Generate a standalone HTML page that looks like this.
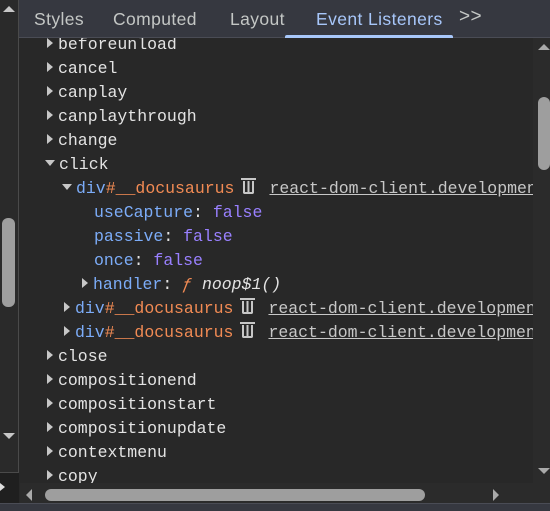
<!DOCTYPE html>
<html><head><style>
*{margin:0;padding:0;box-sizing:border-box}
body{width:550px;height:511px;background:#282828;overflow:hidden;position:relative;font-family:"Liberation Sans",sans-serif}
#left{position:absolute;left:0;top:0;width:19px;height:511px;background:#2a2a2a;border-right:1px solid #4a4a4a}
#tabs{position:absolute;left:19px;top:0;width:531px;height:38px;background:#363840;border-bottom:1px solid #4a4c55}
.tab{position:absolute;top:9px;font-size:17.5px;letter-spacing:0.4px;color:#c4c7c5}
.act{color:#a8c7fa}
#ul{position:absolute;left:266px;top:35px;width:168px;height:3px;background:#a8c7fa;border-radius:2px 2px 0 0}
#content{position:absolute;left:20px;top:38px;width:513px;height:445px;overflow:hidden;font-family:"Liberation Mono",monospace;font-size:16.5px;color:#e3e3e3}
.r{position:absolute;height:24px;line-height:24px;white-space:nowrap}
.tri{display:inline-block;width:0;height:0;border-top:5px solid transparent;border-bottom:5px solid transparent;border-left:6px solid #c7c7c7;margin-right:5px;vertical-align:1px}
.down{display:inline-block;width:0;height:0;border-left:5px solid transparent;border-right:5px solid transparent;border-top:6px solid #c7c7c7;margin-right:4px;vertical-align:3px}
.b{color:#7cacf8}.o{color:#f28b54}.p{color:#9980ff}.k{color:#7cacf8}
.lnk{color:#c7c7c7;text-decoration:underline}
.trash{display:inline-block;width:11px;height:13px;border:2px solid #c7c7c7;border-top:none;border-radius:0 0 2px 2px;vertical-align:-1px;margin:0 15px 0 9px;position:relative;background:linear-gradient(90deg,transparent 2.5px,#c7c7c7 2.5px,#c7c7c7 4.5px,transparent 4.5px)}
.trash:before{content:"";position:absolute;left:-4px;top:-3px;width:15px;height:2px;background:#c7c7c7}
#rsb{position:absolute;left:533px;top:38px;width:17px;height:445px;background:#2b2b2b}
#rthumb{position:absolute;left:538px;top:97px;width:12px;height:73px;background:#9e9e9e;border-radius:6px}
#hsb{position:absolute;left:20px;top:483px;width:530px;height:20px;background:#2b2b2b}
#hthumb{position:absolute;left:45px;top:489px;width:360px;height:12px;background:#9e9e9e;border-radius:6px}
#bot{position:absolute;left:0;top:503px;width:550px;height:8px;background:#363840;border-top:1px solid #4a4c55}
</style></head><body>
<div id="left"></div>
<div style="position:absolute;left:3px;top:6px;border-left:6px solid transparent;border-right:6px solid transparent;border-bottom:6px solid #c7c7c7"></div>
<div style="position:absolute;left:2px;top:218px;width:13px;height:89px;background:#9e9e9e;border-radius:6px"></div>
<div style="position:absolute;left:3px;top:433px;border-left:6px solid transparent;border-right:6px solid transparent;border-top:6px solid #c7c7c7"></div>
<div style="position:absolute;left:0;top:472px;width:19px;height:31px;background:#1f1f1f;border-top:1px solid #4a4a4a"></div>
<div style="position:absolute;left:0;top:483px;border-top:4px solid transparent;border-bottom:4px solid transparent;border-left:5px solid #ddd"></div>
<div id="tabs">
<span class="tab" style="left:15px">Styles</span>
<span class="tab" style="left:94px">Computed</span>
<span class="tab" style="left:211px">Layout</span>
<span class="tab act" style="left:297px">Event Listeners</span>
<span class="tab" style="left:440px;top:6px;font-size:19px">&gt;&gt;</span>
<div id="ul"></div>
</div>
<div id="content">
<div class="r" style="left:27px;top:-5px"><span class="tri"></span>beforeunload</div>
<div class="r" style="left:27px;top:19px"><span class="tri"></span>cancel</div>
<div class="r" style="left:27px;top:43px"><span class="tri"></span>canplay</div>
<div class="r" style="left:27px;top:67px"><span class="tri"></span>canplaythrough</div>
<div class="r" style="left:27px;top:91px"><span class="tri"></span>change</div>
<div class="r" style="left:25px;top:115px"><span class="down"></span>click</div>
<div class="r" style="left:42px;top:139px"><span class="down"></span><span class="b">div</span><span class="o">#__docusaurus</span><span class="trash"></span><span class="lnk">react-dom-client.development.js</span></div>
<div class="r" style="left:74px;top:163px"><span class="k">useCapture</span>: <span class="p">false</span></div>
<div class="r" style="left:74px;top:187px"><span class="k">passive</span>: <span class="p">false</span></div>
<div class="r" style="left:74px;top:211px"><span class="k">once</span>: <span class="p">false</span></div>
<div class="r" style="left:62px;top:235px"><span class="tri"></span><span class="k">handler</span>: <i class="o">ƒ</i> <i>noop$1()</i></div>
<div class="r" style="left:44px;top:259px"><span class="tri"></span><span class="b">div</span><span class="o">#__docusaurus</span><span class="trash"></span><span class="lnk">react-dom-client.development.js</span></div>
<div class="r" style="left:44px;top:283px"><span class="tri"></span><span class="b">div</span><span class="o">#__docusaurus</span><span class="trash"></span><span class="lnk">react-dom-client.development.js</span></div>
<div class="r" style="left:27px;top:307px"><span class="tri"></span>close</div>
<div class="r" style="left:27px;top:331px"><span class="tri"></span>compositionend</div>
<div class="r" style="left:27px;top:355px"><span class="tri"></span>compositionstart</div>
<div class="r" style="left:27px;top:379px"><span class="tri"></span>compositionupdate</div>
<div class="r" style="left:27px;top:403px"><span class="tri"></span>contextmenu</div>
<div class="r" style="left:27px;top:427px"><span class="tri"></span>copy</div>
</div>
<div id="rsb"></div>
<div id="rthumb"></div>
<div style="position:absolute;left:538px;top:44px;border-left:6px solid transparent;border-right:6px solid transparent;border-bottom:6px solid #aaa"></div>
<div style="position:absolute;left:538px;top:468px;border-left:6px solid transparent;border-right:6px solid transparent;border-top:6px solid #aaa"></div>
<div id="hsb"></div>
<div id="hthumb" style="width:380px"></div>
<div style="position:absolute;left:26px;top:489px;border-top:6px solid transparent;border-bottom:6px solid transparent;border-right:6px solid #aaa"></div>
<div style="position:absolute;left:493px;top:489px;border-top:6px solid transparent;border-bottom:6px solid transparent;border-left:6px solid #aaa"></div>
<div id="bot"></div>
</body></html>
